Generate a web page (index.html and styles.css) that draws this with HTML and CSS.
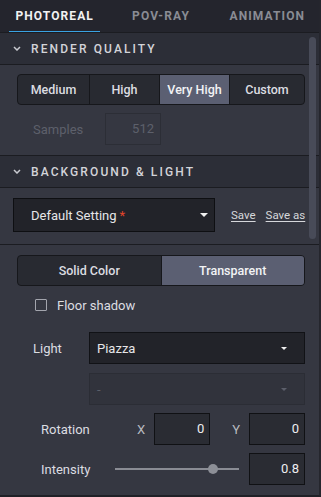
FILE: index.html
```html
<!DOCTYPE html>
<html>
<head>
<meta charset="utf-8">
<link rel="stylesheet" href="styles.css">
</head>
<body>
<div class="panel">
  <div class="tabs">
    <div class="tab active"><span class="tab-label">PHOTOREAL</span></div>
    <div class="tab"><span class="tab-label">POV-RAY</span></div>
    <div class="tab"><span class="tab-label">ANIMATION</span></div>
  </div>

  <div class="section-header">
    <svg class="chev" width="8" height="5" viewBox="0 0 8 5"><path d="M1 1 L4 4 L7 1" fill="none" stroke="#c9cad0" stroke-width="1.5"/></svg>
    <span class="section-title">RENDER QUALITY</span>
  </div>
  <div class="section quality">
    <div class="segmented quad">
      <div class="seg">Medium</div>
      <div class="seg">High</div>
      <div class="seg on">Very High</div>
      <div class="seg">Custom</div>
    </div>
    <div class="samples-row">
      <span class="samples-label">Samples</span>
      <div class="samples-input">512</div>
    </div>
  </div>

  <div class="section-header">
    <svg class="chev" width="8" height="5" viewBox="0 0 8 5"><path d="M1 1 L4 4 L7 1" fill="none" stroke="#c9cad0" stroke-width="1.5"/></svg>
    <span class="section-title">BACKGROUND &amp; LIGHT</span>
  </div>
  <div class="section preset">
    <div class="preset-select">
      <span class="preset-text">Default Setting<span class="star">*</span></span>
      <svg class="caret" width="8" height="4" viewBox="0 0 8 4"><path d="M0 0 H8 L4 4 Z" fill="#f0f0f0"/></svg>
    </div>
    <a class="link">Save</a>
    <a class="link">Save as</a>
  </div>
  <div class="section light">
    <div class="segmented duo">
      <div class="seg">Solid Color</div>
      <div class="seg on">Transparent</div>
    </div>
    <div class="check-row">
      <span class="checkbox"></span>
      <span class="check-text">Floor shadow</span>
    </div>
    <div class="light-row">
      <span class="light-label">Light</span>
      <div class="select">
        <span>Piazza</span>
        <svg class="caret" width="6" height="3" viewBox="0 0 6 3"><path d="M0 0 H6 L3 3 Z" fill="#f0f0f0"/></svg>
      </div>
    </div>
    <div class="light-row">
      <span class="light-label"></span>
      <div class="select disabled">
        <span>-</span>
        <svg class="caret" width="6" height="3" viewBox="0 0 6 3"><path d="M0 0 H6 L3 3 Z" fill="#5c5f6a"/></svg>
      </div>
    </div>
    <div class="param-row">
      <span class="param-label">Rotation</span>
      <span class="axis">X</span>
      <div class="num">0</div>
      <span class="axis axis-y">Y</span>
      <div class="num">0</div>
    </div>
    <div class="param-row">
      <span class="param-label intensity">Intensity</span>
      <div class="slider"><div class="track"></div><div class="thumb"></div></div>
      <div class="num">0.8</div>
    </div>
  </div>
  <div class="scrollbar"></div>
</div>
</body>
</html>
```

FILE: styles.css
```css
* { box-sizing: border-box; }
html, body { margin: 0; padding: 0; }
body {
  width: 321px;
  height: 497px;
  overflow: hidden;
  background: #24252d;
  font-family: Roboto, "Liberation Sans", sans-serif;
  color: #e4e5e8;
}
.panel {
  position: relative;
  width: 321px;
  height: 497px;
  display: flex;
  flex-direction: column;
  background: #353741;
  border-right: 2px solid #25262d;
  border-bottom: 2px solid #1f2026;
}
.tabs {
  display: flex;
  height: 32px;
  background: #24252d;
}
.tab {
  flex: 1;
  display: flex;
  padding: 0 6px 0 9px;
}
.tab-label {
  flex: 1;
  display: flex;
  align-items: center;
  justify-content: center;
  font-size: 12px;
  font-weight: 700;
  letter-spacing: 1.1px;
  color: #8a8c94;
  border-bottom: 2px solid transparent;
  margin-bottom: -1px;
  padding-top: 1px;
}
.tab.active .tab-label {
  color: #f2f2f2;
  border-bottom-color: #3aa3e3;
}
.section-header {
  display: flex;
  align-items: center;
  height: 33px;
  background: #2c2e37;
  border-top: 1px solid #1b1c21;
  border-bottom: 1px solid #1b1c21;
  padding-left: 13px;
}
.chev { margin-right: 10px; }
.section-title {
  font-size: 12px;
  font-weight: 500;
  letter-spacing: 2.1px;
  color: #d3d4d9;
}
.section { padding: 0 14px 0 17px; }
.quality { padding-top: 9px; padding-bottom: 10px; }
.segmented {
  display: flex;
  height: 31px;
  background: #282a31;
  border: 1px solid #16171b;
  border-radius: 4px;
  overflow: hidden;
}
.seg {
  display: flex;
  align-items: center;
  justify-content: center;
  font-size: 12.5px;
  font-weight: 500;
  color: #dcdde1;
  border-left: 1px solid #16171b;
}
.seg:first-child { border-left: none; }
.seg.on { background: #5b5f72; color: #f2f3f5; }
.quad .seg:nth-child(1) { width: 71px; }
.quad .seg:nth-child(2) { width: 70px; }
.quad .seg:nth-child(3) { width: 70px; }
.quad .seg:nth-child(4) { flex: 1; }
.duo .seg { flex: 1; }
.samples-row {
  display: flex;
  align-items: center;
  margin-top: 8px;
  padding-left: 16px;
  height: 32px;
}
.samples-label {
  width: 72px;
  font-size: 13px;
  color: #5d606b;
}
.samples-input {
  width: 56px;
  height: 32px;
  border: 1px solid #2c2e36;
  text-align: right;
  padding-right: 6px;
  line-height: 30px;
  font-size: 13px;
  color: #5d606b;
}
.preset {
  display: flex;
  align-items: center;
  padding: 10px 14px 12px 13px;
  border-bottom: 1px solid #1b1c21;
}
.preset-select {
  flex: none;
  width: 202px;
  height: 34px;
  background: #222329;
  border: 1px solid #0e0f12;
  display: flex;
  align-items: center;
  padding: 0 6px 0 17px;
  font-size: 13px;
  color: #e6e6e8;
}
.preset-text { flex: 1; }
.star { color: #e2452b; margin-left: 3px; }
.caret { flex: none; }
.link {
  white-space: nowrap;
  font-size: 11.5px;
  color: #d6d7db;
  text-decoration: underline;
  text-underline-offset: 2px;
  margin-left: 16px;
}
.link + .link { margin-left: 10px; }
.light { padding-top: 10px; }
.check-row {
  display: flex;
  align-items: center;
  height: 20px;
  margin-top: 9px;
  padding-left: 18px;
}
.checkbox {
  width: 12px;
  height: 12px;
  border: 1.5px solid #a3a5ad;
  border-radius: 1px;
  margin-right: 10px;
}
.check-text { font-size: 13px; color: #dcdde1; }
.light-row {
  display: flex;
  align-items: center;
  margin-top: 17px;
  padding-left: 16px;
}
.light-row + .light-row { margin-top: 9px; }
.light-label {
  width: 56px;
  font-size: 13px;
  color: #dcdde1;
}
.select {
  flex: 1;
  height: 32px;
  background: #222329;
  border: 1px solid #111216;
  display: flex;
  align-items: center;
  padding: 0 17px 0 7px;
  font-size: 13px;
  color: #e6e6e8;
}
.select span { flex: 1; }
.select.disabled {
  background: #31333c;
  border-color: #2b2d35;
  color: #5c5f6a;
}
.param-row {
  display: flex;
  align-items: center;
  height: 32px;
  margin-top: 8px;
  padding-left: 24px;
}
.param-label {
  flex: 1;
  font-size: 13px;
  color: #dcdde1;
}
.param-label.intensity { flex: none; width: 74px; }
.axis {
  font-size: 13px;
  color: #b8bac0;
  margin-right: 9px;
}
.axis-y { margin-left: 22px; }
.num {
  width: 56px;
  height: 32px;
  background: #2a2c33;
  border: 1px solid #101114;
  text-align: right;
  padding-right: 5px;
  line-height: 30px;
  font-size: 13px;
  color: #eeeef0;
}
.slider {
  flex: 1;
  position: relative;
  height: 12px;
  margin-right: 10px;
  display: flex;
  align-items: center;
}
.track {
  flex: 1;
  height: 2px;
  background: #8a8c94;
}
.thumb {
  position: absolute;
  left: 93px;
  top: 1px;
  width: 10px;
  height: 10px;
  border-radius: 50%;
  background: #8d8f97;
}
.scrollbar {
  position: absolute;
  left: 309px;
  top: 37px;
  width: 7px;
  height: 202px;
  border-radius: 4px;
  background: #484b58;
}
```
